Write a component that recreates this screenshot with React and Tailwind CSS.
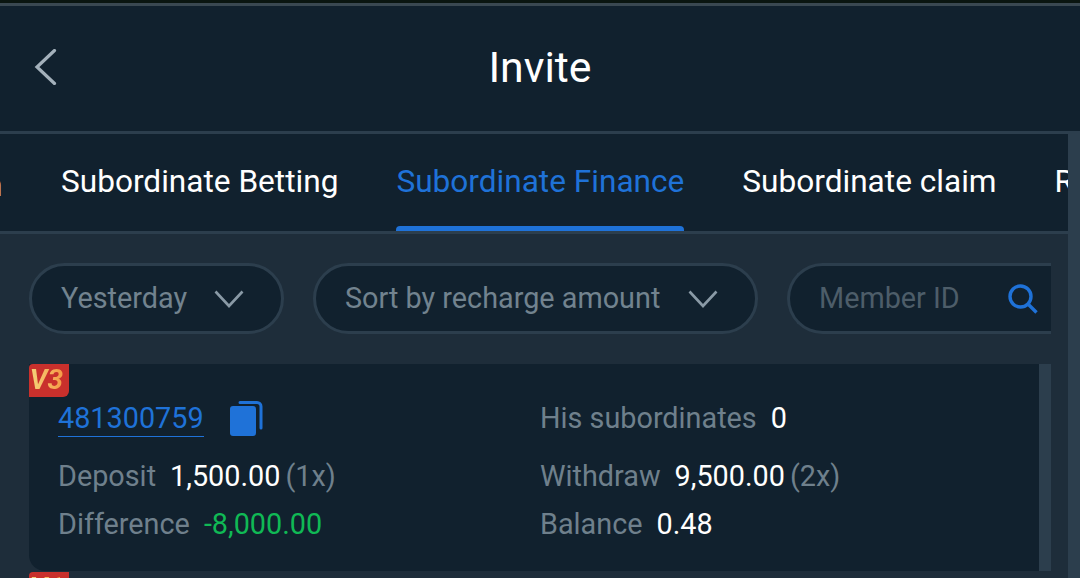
import React from 'react';

function Pill({ label, width, gap }) {
  return (
    <div className={`flex h-[71px] shrink-0 items-center rounded-full border-[3px] border-[#2c3e4d] bg-[#11212e] pl-[29px] ${width}`}>
      <span className="text-[28.8px] text-[#72838f]">{label}</span>
      <svg className={`${gap} h-[18px] w-[30px] text-[#8a9aa6]`} viewBox="0 0 30 18" fill="none">
        <path d="M1.5 1.5 15 16 28.5 1.5" stroke="currentColor" strokeWidth="2.6" />
      </svg>
    </div>
  );
}

function Stat({ label, value, extra, valueClass = 'text-white' }) {
  return (
    <div className="flex items-center text-[28.8px] leading-[34px]">
      <span className="text-[#6f808c]">{label}</span>
      <span className={`ml-[14px] ${valueClass}`}>{value}</span>
      {extra && <span className="ml-[5px] text-[#6f808c]">{extra}</span>}
    </div>
  );
}

function VipBadge({ level, className }) {
  return (
    <div className={`flex h-[33px] w-[40px] items-center justify-center rounded-br-md rounded-tl-sm bg-[#c9302c] pb-[2px] pr-[5px] ${className}`}>
      <span className="bg-gradient-to-r from-[#f3d27a] to-[#f59a45] bg-clip-text text-[28px] font-bold italic text-transparent">{level}</span>
    </div>
  );
}

export default function App() {
  return (
    <div className="flex h-[578px] w-[1080px] flex-col overflow-hidden bg-[#1e2d3a] font-['Roboto',sans-serif]">
      <div className="h-[3px] shrink-0 bg-[#0a1510]" />
      <div className="h-[3px] shrink-0 bg-[#3a4851]" />

      <header className="relative flex h-[125px] shrink-0 items-center justify-center bg-[#11212e] pb-[2px]">
        <svg className="absolute left-[34px] top-[43px] h-[36px] w-[24px] text-[#a4b1bb]" viewBox="0 0 24 36" fill="none">
          <path d="M20.5 1.5 3 18l17.5 16.5" stroke="currentColor" strokeWidth="3.2" strokeLinecap="round" />
        </svg>
        <h1 className="text-[42.8px] text-white">Invite</h1>
      </header>
      <div className="h-[3px] shrink-0 bg-[#2c3e4d]" />

      <div className="flex h-[97px] shrink-0">
        <nav className="relative flex w-[1068px] overflow-hidden whitespace-nowrap bg-[#11212e] pl-[61px] text-[31.6px] text-white">
          <span className="absolute left-[-15px] top-[28px]">n</span>
          <div className="flex h-[97px] shrink-0 items-center pb-[2px]">Subordinate Betting</div>
          <div className="relative ml-[58px] flex h-[97px] shrink-0 items-center pb-[2px] text-[#1f72d8]">
            Subordinate Finance
            <div className="absolute bottom-0 left-0 h-[5px] w-full rounded-t-sm bg-[#1f72d8]" />
          </div>
          <div className="ml-[58px] flex h-[97px] shrink-0 items-center pb-[2px]">Subordinate claim</div>
          <div className="ml-[58px] flex h-[97px] shrink-0 items-center pb-[2px]">Rebate</div>
        </nav>
        <div className="flex-1 bg-[#2c3e4d]" />
      </div>
      <div className="h-[3px] shrink-0 bg-[#2c3e4d]" />

      <div className="flex min-h-0 flex-1">
        <main className="w-[1051px] shrink-0 overflow-hidden pl-[29px] pt-[29px]">
          <div className="flex gap-[29px]">
            <Pill label="Yesterday" width="w-[255px]" gap="ml-[27px]" />
            <Pill label="Sort by recharge amount" width="w-[445px]" gap="ml-[28px]" />
            <div className="flex h-[71px] w-[264px] shrink-0 items-center rounded-l-full rounded-r-lg border-[3px] border-r-0 border-[#2c3e4d] bg-[#11212e] pl-[29px]">
              <span className="text-[28.8px] text-[#4d5d69]">Member ID</span>
              <svg className="ml-[48px] h-[30px] w-[30px] text-[#1f72d8]" viewBox="0 0 30 30" fill="none">
                <circle cx="12.5" cy="12.5" r="10.5" stroke="currentColor" strokeWidth="3.4" />
                <path d="m20 20 8.5 8.5" stroke="currentColor" strokeWidth="3.4" />
              </svg>
            </div>
          </div>

          <div className="mt-[30px] flex">
            <section className="relative h-[207px] w-[1010px] shrink-0 rounded-bl-2xl bg-[#11212e] pl-[29px]">
              <VipBadge level="V3" className="absolute left-0 top-0" />
              <div className="grid grid-cols-[482px_1fr] pt-[36px]">
                <div className="flex h-[36px] items-center">
                  <span className="border-b border-[#1f72d8] text-[28.8px] leading-[36px] text-[#1f72d8]">481300759</span>
                  <svg className="ml-[26px] h-[36px] w-[33px]" viewBox="0 0 33 36" fill="none">
                    <path d="M10 2.5h17a4 4 0 0 1 4 4V28" stroke="#1f72d8" strokeWidth="3" strokeLinecap="round" />
                    <rect x="0" y="6" width="26" height="30" rx="3" fill="#1f72d8" />
                  </svg>
                </div>
                <div className="flex h-[36px] items-center">
                  <Stat label="His subordinates" value="0" />
                </div>
              </div>
              <div className="mt-[23px] grid grid-cols-[482px_1fr]">
                <Stat label="Deposit" value="1,500.00" extra="(1x)" />
                <Stat label="Withdraw" value="9,500.00" extra="(2x)" />
              </div>
              <div className="mt-[14px] grid grid-cols-[482px_1fr]">
                <Stat label="Difference" value="-8,000.00" valueClass="text-[#10b955]" />
                <Stat label="Balance" value="0.48" />
              </div>
            </section>
            <div className="h-[207px] w-[12px] shrink-0 bg-[#2c3e4d]" />
          </div>

          <VipBadge level="V1" className="mt-[1px]" />
        </main>

        <div className="w-[17px] shrink-0" />
        <div className="flex-1 bg-[#2c3e4d]" />
      </div>
    </div>
  );
}
